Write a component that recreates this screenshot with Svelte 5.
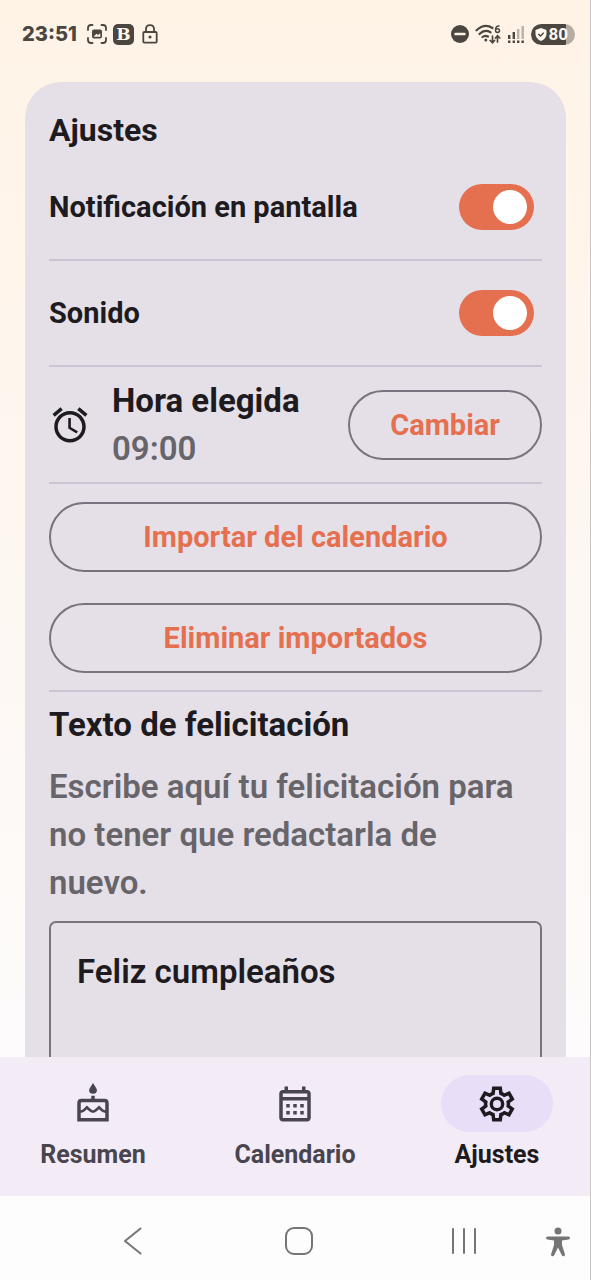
<script>
  let screenNotice = $state(true);
  let sound = $state(true);
  let greeting = $state('Feliz cumpleaños');
</script>

<div class="app">
  <header class="status">
    <div class="group">
      <time class="clock">23:51</time>
      <svg width="20" height="20" viewBox="0 0 20 20" fill="none" stroke="currentColor" stroke-width="1.8" stroke-linecap="round" aria-hidden="true">
        <path d="M1 6V4Q1 1 4 1H5.500M14.500 1H16Q19 1 19 4V6M19 14V16Q19 19 16 19H14.500M5.500 19H4Q1 19 1 16V14" />
        <path fill="currentColor" stroke="none" fill-rule="evenodd" d="M7 5.500H13Q15 5.500 15 7.500V12.500Q15 14.500 13 14.500H7Q5 14.500 5 12.500V7.500Q5 5.500 7 5.500ZM6.500 12.800H13.500L13.200 9.200L11 11L9.500 9.800Z" />
      </svg>
      <span class="badge">B</span>
      <svg width="16" height="20" viewBox="0 0 16 20" fill="none" stroke="currentColor" stroke-width="1.8" aria-hidden="true">
        <rect x="1.300" y="8" width="13.400" height="10.600" rx="1" />
        <path d="M4 8V5Q4 1.200 8 1.200T12 5V8" />
        <circle cx="8" cy="13" r="1.600" fill="currentColor" stroke="none" />
      </svg>
    </div>
    <div class="group">
      <svg width="18" height="18" viewBox="0 0 18 18" aria-hidden="true">
        <circle cx="9" cy="9" r="9" fill="currentColor" />
        <path d="M4.500 9H13.500" stroke="#fff3e6" stroke-width="2.400" stroke-linecap="round" />
      </svg>
      <svg width="26" height="20" viewBox="0 0 26 20" fill="none" stroke="currentColor" stroke-linecap="round" aria-hidden="true">
        <path stroke-width="2.200" d="M1.500 6.300Q9.500 -1.300 17.500 4M4.500 10Q9.500 5 15.500 8.300M7.500 13Q10 10.800 13 12.500" />
        <circle cx="10.800" cy="16" r="1.500" fill="currentColor" stroke="none" />
        <path stroke-width="1.700" d="M17.500 12V18.500M15.200 16.500L17.500 18.700L19.500 16.500M22.500 18V12M20.500 14L22.500 11.800L24.800 14" />
        <path stroke-width="1.500" d="M24 2Q20.500 1.800 20.500 6Q20.500 8.500 22.500 8.500T24.500 6.600T22.500 4.800T20.700 6" />
      </svg>
      <svg width="18" height="20" viewBox="0 0 18 20" aria-hidden="true">
        <g fill="currentColor">
          <rect x="1" y="11" width="2.400" height="4" /><rect x="5.600" y="8" width="2.400" height="7" />
          <rect x="1" y="16.500" width="2.400" height="2.500" /><rect x="5.600" y="16.500" width="2.400" height="2.500" />
          <rect x="10" y="16.500" width="2.400" height="2.500" /><rect x="14.500" y="16.500" width="2.400" height="2.500" />
        </g>
        <g fill="#b9b1a8"><rect x="10" y="5" width="2.400" height="10" /><rect x="14.500" y="2" width="2.400" height="13" /></g>
      </svg>
      <span class="battery">
        <svg width="12" height="13" viewBox="0 0 12 13" aria-hidden="true">
          <path d="M6 0L11.500 2V6Q11.500 10.500 6 13Q.5 10.500 .5 6V2Z" fill="#fff8f0" />
          <path d="M3.300 6L5.500 8L8.700 4.800" fill="none" stroke="#4b4640" stroke-width="1.500" />
        </svg>
        <span>80</span>
      </span>
    </div>
  </header>

  <main>
    <section class="card">
      <h1>Ajustes</h1>
      <label class="row">
        <span>Notificación en pantalla</span>
        <input class="switch" type="checkbox" role="switch" bind:checked={screenNotice} />
      </label>
      <label class="row">
        <span>Sonido</span>
        <input class="switch" type="checkbox" role="switch" bind:checked={sound} />
      </label>
      <div class="row hour">
        <svg width="42" height="42" viewBox="0 0 24 24" fill="currentColor" aria-hidden="true">
          <path d="M22 5.720l-4.600-3.860-1.290 1.530 4.600 3.860L22 5.720zM7.880 3.390L6.600 1.860 2 5.710l1.290 1.530 4.590-3.850zM12.500 8H11v6l4.750 2.850.75-1.230-4-2.370V8zM12 4c-4.970 0-9 4.030-9 9s4.020 9 9 9c4.970 0 9-4.030 9-9s-4.030-9-9-9zm0 16c-3.870 0-7-3.130-7-7s3.130-7 7-7 7 3.130 7 7-3.130 7-7 7z" />
        </svg>
        <div class="chosen">
          <h2>Hora elegida</h2>
          <time>09:00</time>
        </div>
        <button class="pill">Cambiar</button>
      </div>
      <div class="actions">
        <button class="pill">Importar del calendario</button>
        <button class="pill">Eliminar importados</button>
      </div>
      <div class="greeting">
        <h2><label for="greeting">Texto de felicitación</label></h2>
        <p>Escribe aquí tu felicitación para no tener que redactarla de nuevo.</p>
        <textarea id="greeting" rows="4" spellcheck="false" bind:value={greeting}></textarea>
      </div>
    </section>
  </main>

  <nav class="tabs">
    <a href="#resumen">
      <span class="icon">
        <svg width="42" height="42" viewBox="0 0 24 24" aria-hidden="true">
          <path fill="currentColor" d="M12 0L13.700 2.700Q14.200 3.500 14.200 4.200Q14.200 6.200 12 6.200T9.800 4.200Q9.800 3.500 10.300 2.700Z" />
          <path fill="none" stroke="currentColor" stroke-width="2" d="M12 7.300V10M4 21V11.500Q4 10 5.500 10H18.500Q20 10 20 11.500V21Z" />
          <path fill="none" stroke="currentColor" stroke-width="1.500" d="M4 16.300C6 16.300 6.500 16 8.500 13.900C10.800 16 11 16.300 12 16.300S13.200 16 15.500 13.900C17.500 16 18 16.300 20 16.300" />
        </svg>
      </span>
      Resumen
    </a>
    <a href="#calendario">
      <span class="icon">
        <svg width="42" height="42" viewBox="0 0 24 24" fill="currentColor" aria-hidden="true">
          <path d="M19 4h-1V2h-2v2H8V2H6v2H5c-1.110 0-2 .9-2 2v14c0 1.100.89 2 2 2h14c1.100 0 2-.9 2-2V6c0-1.100-.9-2-2-2zm0 16H5V10h14v10zm0-12H5V6h14v2z" />
          <path d="M7 12h2v2H7zM11 12h2v2h-2zM15 12h2v2h-2zM7 16h2v2H7zM11 16h2v2h-2zM15 16h2v2h-2z" />
        </svg>
      </span>
      Calendario
    </a>
    <a href="#ajustes" class="active" aria-current="page">
      <span class="icon">
        <svg width="42" height="42" viewBox="0 -960 960 960" fill="currentColor" aria-hidden="true">
          <path d="m370-80-16-128q-13-5-24.500-12T307-235l-119 50L78-375l103-78q-1-7-1-13.500v-27q0-6.500 1-13.500L78-585l110-190 119 50q11-8 23-15t24-12l16-128h220l16 128q13 5 24.500 12t22.500 15l119-50 110 190-103 78q1 7 1 13.500v27q0 6.500-2 13.500l103 78-110 190-118-50q-11 8-23 15t-24 12L590-80H370Zm70-80h79l14-106q31-8 57.500-23.500T639-327l99 41 39-68-86-65q5-14 7-29.500t2-31.500q0-16-2-31.500t-7-29.500l86-65-39-68-99 42q-22-23-48.500-38.500T533-694l-13-106h-79l-14 106q-31 8-57.500 23.500T321-633l-99-41-39 68 86 64q-5 15-7 30t-2 32q0 16 2 31t7 30l-86 65 39 68 99-42q22 23 48.500 38.500T427-266l13 106Z" />
          <circle cx="480" cy="-480" r="130" fill="none" stroke="currentColor" stroke-width="78" />
        </svg>
      </span>
      Ajustes
    </a>
  </nav>

  <footer class="system">
    <div class="keys">
      <button aria-label="Atrás">
        <svg width="30" height="30" viewBox="0 0 30 30"><path d="M22.500 2.500L7 15L22.500 27.500" /></svg>
      </button>
      <button aria-label="Inicio">
        <svg width="30" height="30" viewBox="0 0 30 30"><rect x="2" y="2" width="26" height="26" rx="8" /></svg>
      </button>
      <button aria-label="Recientes">
        <svg width="30" height="30" viewBox="0 0 30 30"><path d="M4 3V27M15 3V27M26 3V27" /></svg>
      </button>
    </div>
    <button aria-label="Accesibilidad">
      <svg width="26" height="32" viewBox="0 0 26 32">
        <g fill="#757575" stroke="none">
          <circle cx="13" cy="6" r="3.500" />
          <path d="M2.500 11.500H23.500Q25 11.700 25 13T23.500 14.500L17 15.500V20L20 29.500Q20 31 18.800 31.200T16.800 30.300L13 22.500L9.200 30.300Q8.400 31.400 7.200 31.200T6 29.500L9 20V15.500L2.500 14.500Q1 14.300 1 13T2.500 11.500Z" />
        </g>
      </svg>
    </button>
  </footer>
</div>

<style>
  :global(body) {
    margin: 0;
  }

  .app {
    display: flex;
    flex-direction: column;
    box-sizing: border-box;
    height: 100vh;
    border-right: 1px solid #c9c3c1;
    background: linear-gradient(#fff3e6, #fdfbfb 80%);
    color: #1d1b20;
    font-family: Roboto, sans-serif;
    font-weight: 700;
  }

  .status {
    display: flex;
    justify-content: space-between;
    align-items: center;
    flex: none;
    height: 68px;
    padding: 0 15px 0 22px;
    color: #4b4640;
    font-family: Inter, sans-serif;
  }

  .group {
    display: flex;
    align-items: center;
    gap: 6px;
  }

  .clock {
    margin-right: 4px;
    font-size: 20px;
    font-weight: 800;
  }

  .badge {
    width: 21px;
    margin-right: 2px;
    border-radius: 5px;
    background: #4b4640;
    color: #fff8f0;
    font: 700 17px/21px "DejaVu Serif", serif;
    text-align: center;
  }

  .battery {
    display: flex;
    align-items: center;
    gap: 1px;
    box-sizing: border-box;
    height: 21px;
    padding: 0 7px 0 4px;
    border-radius: 11px;
    background: linear-gradient(90deg, #4b4640 80%, #b5ada4 80%);
    color: #fff8f0;
    font-family: Roboto, sans-serif;
    font-size: 17px;
  }

  main {
    flex: 1;
    min-height: 0;
    padding: 14px 24px 0 25px;
    overflow-y: auto;
    scrollbar-width: none;
  }

  .card {
    padding: 24px;
    border-radius: 36px;
    background: #e5e0e8;
  }

  h1,
  h2,
  p {
    margin: 0;
    line-height: 48px;
  }

  h1 {
    padding-bottom: 1px;
    font-size: 32px;
  }

  h2 {
    font-size: 33px;
  }

  .row {
    display: flex;
    align-items: center;
    justify-content: space-between;
    height: 104px;
    border-bottom: 2px solid #cac4d4;
    font-size: 29px;
  }

  .switch {
    display: flex;
    align-items: center;
    justify-content: flex-start;
    appearance: none;
    box-sizing: border-box;
    width: 75px;
    height: 46px;
    margin: 0 8px 0 0;
    padding: 0 7px;
    border-radius: 23px;
    background: #a9a3ad;
  }

  .switch::before {
    content: "";
    width: 34px;
    height: 34px;
    border-radius: 50%;
    background: #fff;
  }

  .switch:checked {
    justify-content: flex-end;
    background: #e57050;
  }

  .hour {
    gap: 21px;
    height: 115px;
  }

  .chosen {
    flex: 1;
  }

  .chosen time {
    display: block;
    line-height: 48px;
  }

  .chosen time,
  p {
    color: #67656a;
    font-size: 33px;
    font-weight: 600;
  }

  p {
    padding-right: 8px;
  }

  .pill {
    height: 70px;
    padding: 0 40px;
    border: 2px solid #79727f;
    border-radius: 35px;
    background: transparent;
    color: #e57050;
    font: 700 29px/40px Roboto, sans-serif;
  }

  .actions {
    display: flex;
    flex-direction: column;
    gap: 31px;
    padding: 18px 0 17px;
    border-bottom: 2px solid #cac4d4;
  }

  .greeting {
    display: flex;
    flex-direction: column;
    gap: 14px;
    padding-top: 9px;
  }

  textarea {
    padding: 25px 26px;
    border: 2px solid #79727f;
    border-radius: 7px;
    outline: none;
    background: transparent;
    color: #1d1b20;
    font: 600 33px/48px Roboto, sans-serif;
    resize: none;
  }

  .tabs {
    display: grid;
    grid-template-columns: repeat(3, 1fr);
    gap: 16px;
    flex: none;
    height: 139px;
    background: #f3ecf7;
  }

  .tabs a {
    display: flex;
    flex-direction: column;
    align-items: center;
    gap: 8px;
    padding-top: 18px;
    color: #49454f;
    font-size: 25px;
    line-height: 30px;
    text-decoration: none;
  }

  .icon {
    display: grid;
    place-items: center;
    width: 112px;
    height: 57px;
    border-radius: 29px;
  }

  .tabs .active {
    color: #1d1b20;
  }

  .active .icon {
    background: #e8def8;
  }

  .system {
    display: flex;
    align-items: center;
    flex: none;
    gap: 66px;
    box-sizing: border-box;
    height: 84px;
    padding: 5px 19px 0 118px;
    background: #fdfdfd;
  }

  .keys {
    display: flex;
    flex: 1;
    justify-content: space-between;
  }

  .system button {
    display: grid;
    padding: 0;
    border: 0;
    background: none;
  }

  .system svg {
    fill: none;
    stroke: #757575;
    stroke-width: 2;
    stroke-linecap: round;
    stroke-linejoin: round;
  }
</style>
